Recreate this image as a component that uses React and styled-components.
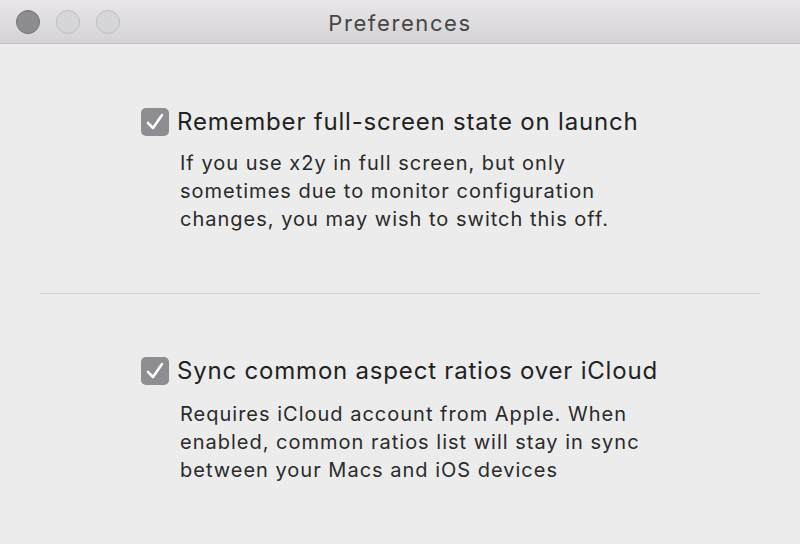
import React from "react";
import styled, { createGlobalStyle } from "styled-components";

const Global = createGlobalStyle`
  html, body { margin: 0; padding: 0; background: #ececec; }
  body { font-family: Inter, "Noto Sans", "Liberation Sans", sans-serif; -webkit-font-smoothing: antialiased; }
`;

const Window = styled.div`
  width: 800px;
  height: 544px;
  background: #ececec;
  display: flex;
  flex-direction: column;
  overflow: hidden;
`;

const TitleBar = styled.div`
  height: 43px;
  flex: none;
  border-bottom: 1px solid #c2c0c2;
  background: linear-gradient(#e9e7e9, #d4d2d4);
  display: flex;
  align-items: center;
  position: relative;
`;

const Lights = styled.div`
  display: flex;
  gap: 16px;
  padding-left: 16px;
`;

const Light = styled.span`
  width: 22px;
  height: 22px;
  border-radius: 50%;
  background: ${(p) => (p.$active ? "#8d8c8f" : "#d6d5d7")};
  border: 1px solid ${(p) => (p.$active ? "#737275" : "#bfbebf")};
`;

const Title = styled.div`
  position: absolute;
  left: 0;
  right: 0;
  top: 2px;
  bottom: 0;
  display: flex;
  align-items: center;
  justify-content: center;
  font-size: 22px;
  color: #464646;
  letter-spacing: 1.6px;
  pointer-events: none;
`;

const Section = styled.div`
  height: ${(p) => p.$h}px;
  box-sizing: border-box;
  padding-top: ${(p) => p.$top}px;
  padding-left: 141px;
  flex: none;
`;

const Row = styled.label`
  display: flex;
  align-items: center;
  gap: 8px;
`;

const Box = styled.span`
  width: 28px;
  height: 28px;
  border-radius: 5px;
  background: #8e8d92;
  display: flex;
  align-items: center;
  justify-content: center;
  flex: none;
`;

const Label = styled.span`
  font-size: 24px;
  color: #222222;
  letter-spacing: 0.8px;
`;

const Desc = styled.p`
  margin: ${(p) => p.$gap}px 0 0 39px;
  font-size: 20px;
  line-height: 28px;
  color: #2a2a2a;
  letter-spacing: 1px;
`;

const Divider = styled.div`
  height: 1px;
  margin: 0 40px;
  background: #d3d3d3;
  flex: none;
`;

const Check = () => (
  <svg width="20" height="18" viewBox="0 0 20 18">
    <path d="M3 10 L8 15 L17 2" fill="none" stroke="#fff" strokeWidth="2.6" strokeLinecap="round" strokeLinejoin="round" />
  </svg>
);

export default function App() {
  return (
    <Window>
      <Global />
      <TitleBar>
        <Lights>
          <Light $active />
          <Light />
          <Light />
        </Lights>
        <Title>Preferences</Title>
      </TitleBar>
      <Section $h={249} $top={63}>
        <Row>
          <Box><Check /></Box>
          <Label>Remember full-screen state on launch</Label>
        </Row>
        <Desc $gap={13}>
          If you use x2y in full screen, but only<br />
          sometimes due to monitor configuration<br />
          changes, you may wish to switch this off.
        </Desc>
      </Section>
      <Divider />
      <Section $h={250} $top={62}>
        <Row>
          <Box><Check /></Box>
          <Label>Sync common aspect ratios over iCloud</Label>
        </Row>
        <Desc $gap={15}>
          Requires iCloud account from Apple. When<br />
          enabled, common ratios list will stay in sync<br />
          between your Macs and iOS devices
        </Desc>
      </Section>
    </Window>
  );
}
